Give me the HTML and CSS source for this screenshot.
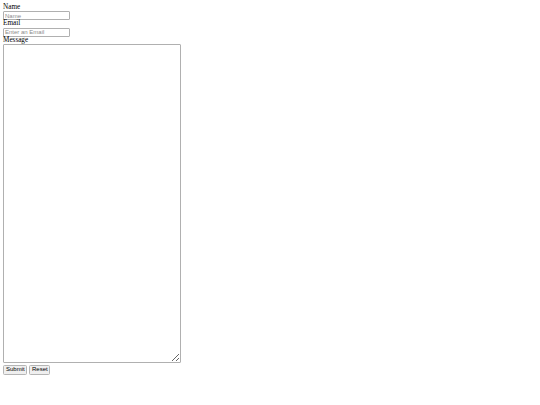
FILE: index.html
```html
<!DOCTYPE html>
<html>
<head>
<meta charset="utf-8">
<link rel="stylesheet" href="styles.css">
</head>
<body>
<form class="form">
  <label class="label" for="name">Name</label>
  <input class="field" id="name" type="text" placeholder="Name">
  <label class="label" for="email">Email</label>
  <input class="field" id="email" type="email" placeholder="Enter an Email">
  <label class="label" for="msg">Message</label>
  <textarea class="message" id="msg"></textarea>
  <div class="actions">
    <button class="btn btn-submit" type="submit">Submit</button>
    <button class="btn btn-reset" type="reset">Reset</button>
  </div>
</form>
</body>
</html>
```
FILE: styles.css
```css
body {
  margin: 0;
  padding: 3.5px 3px;
  font-family: "Liberation Serif", "Times New Roman", serif;
  font-size: 7.2px;
  color: #000;
  background: #fff;
}
.form {
  display: flex;
  flex-direction: column;
  align-items: flex-start;
}
.label {
  display: block;
  line-height: 7.5px;
  height: 7.5px;
}
.field {
  box-sizing: border-box;
  width: 67px;
  height: 9px;
  margin: 0;
  padding: 0 1px;
  border: 1px solid #b0b0b0;
  border-radius: 1px;
  font-family: "Liberation Sans", Arial, sans-serif;
  font-size: 6px;
  line-height: 7px;
  color: #000;
  outline: none;
}
.field::placeholder { color: #8a8a8a; }
.message {
  box-sizing: border-box;
  display: block;
  width: 178px;
  height: 319px;
  margin: 0;
  padding: 1px;
  border: 1px solid #b0b0b0;
  border-radius: 1px;
  resize: both;
}
.actions {
  display: flex;
  gap: 2px;
  margin-top: 2px;
}
.btn {
  box-sizing: border-box;
  height: 9.5px;
  margin: 0;
  padding: 0 2px;
  border: 1px solid #b5b5b5;
  border-radius: 1.5px;
  background: #efefef;
  font-family: "Liberation Sans", Arial, sans-serif;
  font-size: 6px;
  line-height: 7px;
  color: #000;
}
.btn-submit { width: 24px; }
.btn-reset { width: 21px; }
```
